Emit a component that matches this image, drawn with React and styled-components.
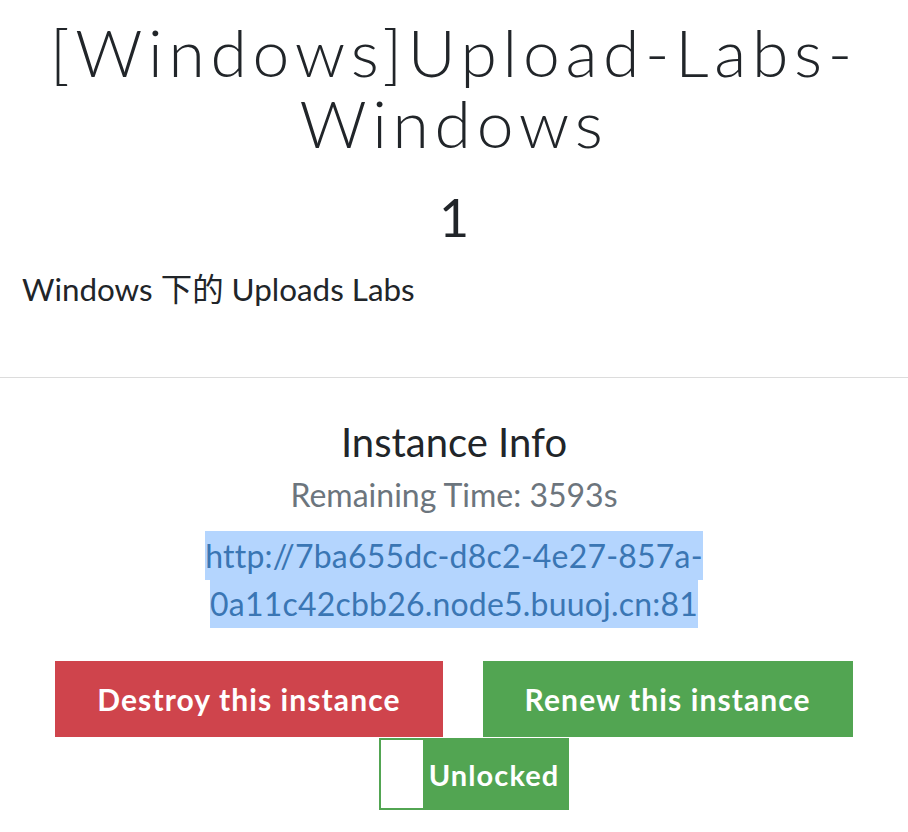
import React from "react";
import styled, { createGlobalStyle } from "styled-components";

const Global = createGlobalStyle`
  html, body { margin: 0; padding: 0; background: #fff; }
  body { font-family: Lato, "Noto Sans CJK SC", sans-serif; color: #212529; }
`;

const Page = styled.div`
  width: 908px;
  height: 832px;
  overflow: hidden;
`;

const Header = styled.div`
  padding: 16px 14px 0;
  text-align: center;
`;

const Title = styled.h1`
  margin: 0;
  font-family: Lato, sans-serif;
  font-weight: 300;
  font-size: 66px;
  line-height: 71px;
  letter-spacing: 5.7px;
  color: #212529;
`;

const Value = styled.h3`
  margin: 29px 0 0;
  font-family: Lato, sans-serif;
  font-weight: 400;
  font-size: 52px;
  line-height: 60px;
  color: #212529;
`;

const Description = styled.p`
  margin: 18px 0 0;
  padding: 0 22px;
  font-size: 31.4px;
  line-height: 48px;
  font-family: Lato, "Noto Sans CJK SC", sans-serif;
`;

const Rule = styled.hr`
  margin: 64px 0 0;
  border: 0;
  border-top: 1px solid #dcdcdc;
`;

const Instance = styled.div`
  padding: 40px 14px 0;
  text-align: center;
`;

const InfoTitle = styled.h4`
  margin: 0;
  font-size: 40px;
  font-weight: 400;
  line-height: 48px;
`;

const Remaining = styled.div`
  margin-top: 5px;
  font-size: 32px;
  line-height: 48px;
  color: #6c757d;
`;

const LinkWrap = styled.div`
  margin-top: 13px;
  font-size: 32px;
  line-height: 48px;
  letter-spacing: 0.2px;
`;

const Link = styled.a`
  color: #3a76b4;
  text-decoration: none;
  background: #b4d5fe;
  padding: 4.8px 0;
`;

const Buttons = styled.div`
  margin-top: 33px;
  display: flex;
  justify-content: center;
  gap: 40px;
`;

const Btn = styled.button`
  border: 0;
  margin: 0;
  height: 76px;
  padding: 0 42px;
  font-family: Lato, sans-serif;
  font-weight: 700;
  font-size: 30px;
  letter-spacing: 1.1px;
  color: #fff;
  background: ${(p) => (p.$danger ? "#cf444c" : "#52a552")};
  cursor: pointer;
`;

const LockRow = styled.div`
  display: flex;
  justify-content: center;
  padding-left: 40px;
  margin-top: 1px;
`;

const Toggle = styled.label`
  display: flex;
  height: 72px;
  box-sizing: border-box;
  border: 2px solid #52a552;
  background: #52a552;
`;

const Box = styled.span`
  width: 42px;
  background: #fff;
`;

const ToggleText = styled.span`
  display: flex;
  align-items: center;
  padding: 0 8px 0 6px;
  font-weight: 700;
  font-size: 29px;
  letter-spacing: 1.1px;
  color: #fff;
`;

export default function App() {
  return (
    <Page>
      <Global />
      <Header>
        <Title>[Windows]Upload-Labs-Windows</Title>
        <Value>1</Value>
      </Header>
      <Description>Windows 下的 Uploads Labs</Description>
      <Rule />
      <Instance>
        <InfoTitle>Instance Info</InfoTitle>
        <Remaining>Remaining Time: 3593s</Remaining>
        <LinkWrap>
          <Link href="#">http://7ba655dc-d8c2-4e27-857a-0a11c42cbb26.node5.buuoj.cn:81</Link>
        </LinkWrap>
        <Buttons>
          <Btn $danger>Destroy this instance</Btn>
          <Btn>Renew this instance</Btn>
        </Buttons>
        <LockRow>
          <Toggle>
            <Box />
            <ToggleText>Unlocked</ToggleText>
          </Toggle>
        </LockRow>
      </Instance>
    </Page>
  );
}
